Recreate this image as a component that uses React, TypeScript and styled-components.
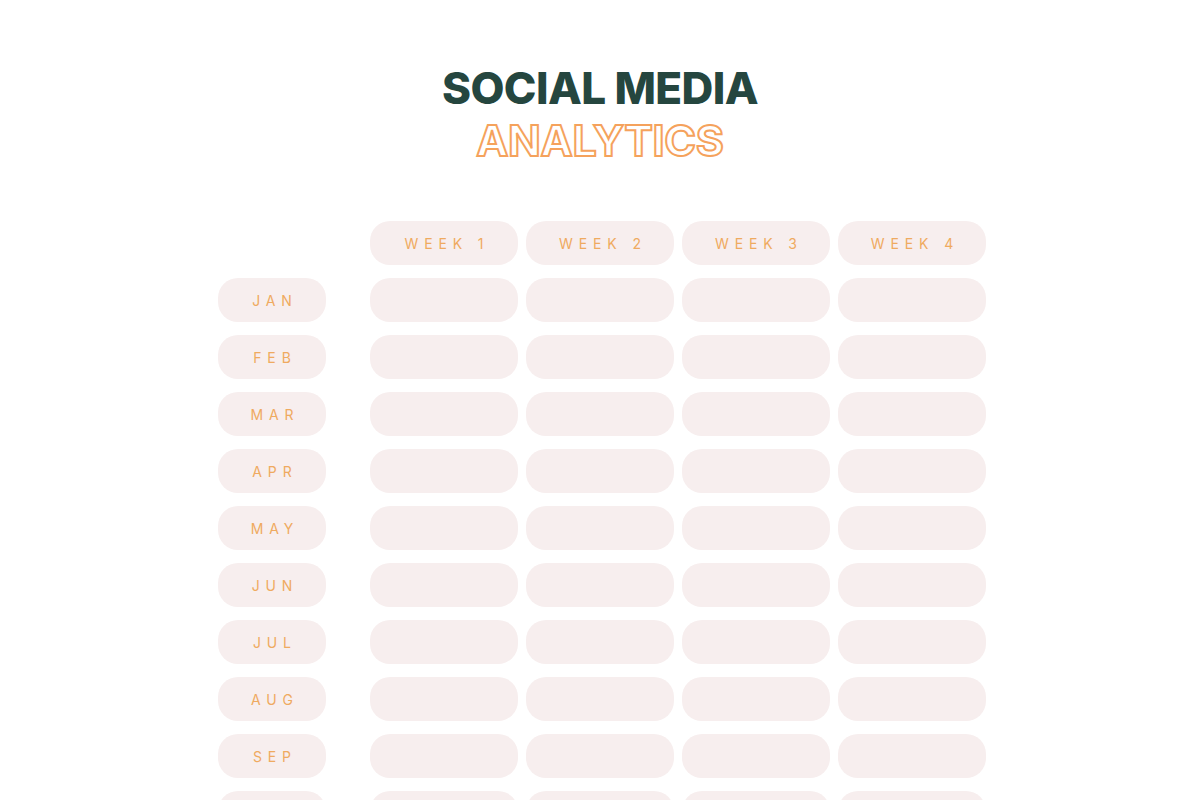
import React from "react";
import styled, { createGlobalStyle } from "styled-components";

const Global = createGlobalStyle`
  html, body { margin: 0; padding: 0; background: #ffffff; overflow: hidden; }
  body { font-family: "Inter", "Liberation Sans", sans-serif; }
`;

const Page = styled.div`
  width: 1200px;
  height: 800px;
  overflow: hidden;
  display: flex;
  flex-direction: column;
  align-items: center;
  padding-top: 62px;
  box-sizing: border-box;
`;

const Title = styled.h1`
  margin: 0;
  font-family: "Inter", "Liberation Sans", sans-serif;
  font-weight: 800;
  font-size: 44px;
  line-height: 52px;
  color: #25463f;
  text-align: center;
  letter-spacing: -0.6px;
`;

const Outline = styled.div`
  font-family: "Inter", "Liberation Sans", sans-serif;
  font-weight: 700;
  font-size: 43px;
  line-height: 52px;
  color: transparent;
  -webkit-text-stroke: 2px #f5a25c;
  text-align: center;
  letter-spacing: -0.3px;
`;

const Grid = styled.div`
  margin-top: 55px;
  margin-left: 4px;
  display: grid;
  grid-template-columns: 144px repeat(4, 148px);
  column-gap: 8px;
  row-gap: 13px;
`;

const Pill = styled.div`
  height: 44px;
  border-radius: 20px;
  background: #f7eeee;
  display: flex;
  align-items: center;
  justify-content: center;
  font-family: "Inter", "Liberation Sans", sans-serif;
  font-size: 14px;
  font-weight: 400;
  letter-spacing: 0.42em;
  padding-left: 0.42em;
  box-sizing: border-box;
  color: #efaa60;
`;

const LabelCol = styled.div`
  width: 108px;
  height: 44px;
`;

const Row = styled.div`
  display: contents;
`;

const months = ["JAN", "FEB", "MAR", "APR", "MAY", "JUN", "JUL", "AUG", "SEP", "OCT", "NOV", "DEC"];
const weeks = ["WEEK 1", "WEEK 2", "WEEK 3", "WEEK 4"];

export default function App() {
  return (
    <>
      <Global />
      <Page>
        <Title>SOCIAL MEDIA</Title>
        <Outline>ANALYTICS</Outline>
        <Grid>
          <Row>
            <LabelCol />
            {weeks.map((w) => (
              <Pill key={w}>{w}</Pill>
            ))}
          </Row>
          {months.map((m) => (
            <Row key={m}>
              <LabelCol>
                <Pill>{m}</Pill>
              </LabelCol>
              {weeks.map((w) => (
                <Pill key={w} />
              ))}
            </Row>
          ))}
        </Grid>
      </Page>
    </>
  );
}
